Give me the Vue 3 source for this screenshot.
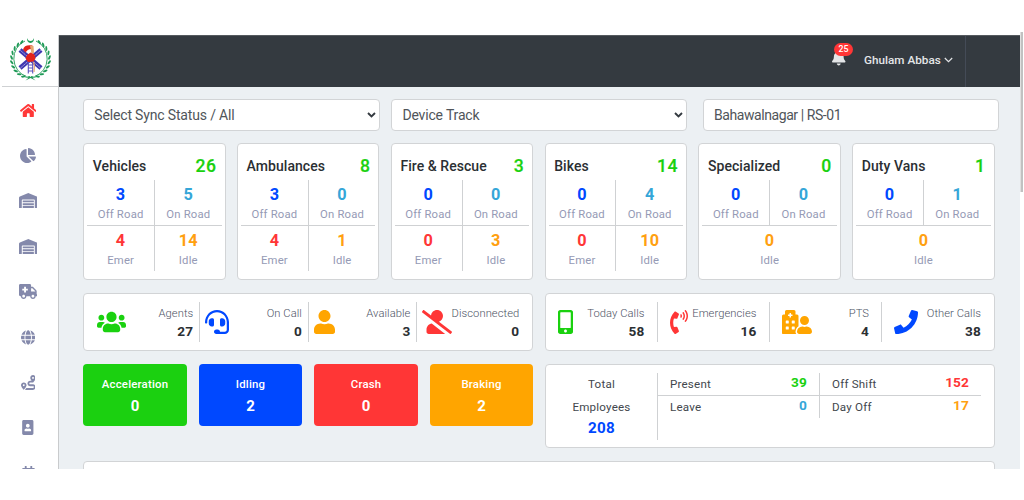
<script setup>
const nav = [
  { name: 'home', box: '0 0 576 512', w: 16.6, active: true, d: 'M280.37 148.26L96 300.11V464a16 16 0 0 0 16 16l112.06-.29a16 16 0 0 0 15.92-16V368a16 16 0 0 1 16-16h64a16 16 0 0 1 16 16v95.64a16 16 0 0 0 16 16.05L464 480a16 16 0 0 0 16-16V300L295.67 148.26a12.19 12.19 0 0 0-15.3 0zM571.6 251.47L488 182.56V44.05a12 12 0 0 0-12-12h-56a12 12 0 0 0-12 12v72.61L318.47 43a48 48 0 0 0-61 0L4.34 251.47a12 12 0 0 0-1.6 16.9l25.5 31A12 12 0 0 0 45.15 301l235.22-193.74a12.19 12.19 0 0 1 15.3 0L530.9 301a12 12 0 0 0 16.9-1.6l25.5-31a12 12 0 0 0-1.7-16.93z' },
  { name: 'reports', box: '0 0 544 512', w: 16, d: 'M527.79 288H290.5l158.03 158.03c6.04 6.04 15.98 6.53 22.19.68 38.7-36.46 65.32-85.61 73.13-140.86 1.34-9.46-6.51-17.85-16.06-17.85zm-15.83-64.8C503.72 103.74 408.26 8.28 288.8.04 279.68-.59 272 7.1 272 16.24V240h223.77c9.14 0 16.82-7.68 16.19-16.8zM224 288V50.71c0-9.55-8.39-17.4-17.84-16.06C86.99 51.49-4.1 155.6.14 280.37 4.5 408.51 114.83 513.59 243.03 511.98c50.4-.63 96.97-16.87 135.26-44.03 7.9-5.6 8.42-17.23 1.57-24.08L224 288z' },
  { name: 'warehouse', box: '0 0 640 512', w: 18.6, d: 'M504 352H136.4c-4.4 0-8 3.6-8 8l-.1 48c0 4.4 3.6 8 8 8H504c4.4 0 8-3.6 8-8v-48c0-4.4-3.6-8-8-8zm0 96H136.1c-4.4 0-8 3.6-8 8l-.1 48c0 4.4 3.6 8 8 8h368c4.4 0 8-3.6 8-8v-48c0-4.4-3.6-8-8-8zm0-192H136.6c-4.4 0-8 3.6-8 8l-.1 48c0 4.4 3.6 8 8 8H504c4.4 0 8-3.6 8-8v-48c0-4.4-3.6-8-8-8zm106.5-139L338.4 3.7a48.15 48.15 0 0 0-36.9 0L29.5 117C11.7 124.5 0 141.9 0 161.3V504c0 4.4 3.6 8 8 8h80c4.4 0 8-3.6 8-8V256c0-17.6 14.6-32 32.6-32h382.8c18 0 32.6 14.4 32.6 32v248c0 4.4 3.6 8 8 8h80c4.4 0 8-3.6 8-8V161.3c0-19.4-11.7-36.8-29.5-44.3z' },
  { name: 'ambulance', box: '0 0 640 512', w: 18.6, d: 'M624 352h-16V243.9c0-12.7-5.1-24.9-14.1-33.9L494 110.1c-9-9-21.2-14.1-33.9-14.1H416V48c0-26.5-21.5-48-48-48H48C21.5 0 0 21.5 0 48v320c0 26.5 21.5 48 48 48h16c0 53 43 96 96 96s96-43 96-96h128c0 53 43 96 96 96s96-43 96-96h48c8.8 0 16-7.2 16-16v-32c0-8.8-7.2-16-16-16zM160 464c-26.5 0-48-21.5-48-48s21.5-48 48-48 48 21.5 48 48-21.5 48-48 48zm144-248c0 4.4-3.6 8-8 8h-56v56c0 4.4-3.6 8-8 8h-48c-4.4 0-8-3.6-8-8v-56h-56c-4.4 0-8-3.6-8-8v-48c0-4.4 3.6-8 8-8h56v-56c0-4.4 3.6-8 8-8h48c4.4 0 8 3.6 8 8v56h56c4.4 0 8 3.6 8 8v48zm176 248c-26.5 0-48-21.5-48-48s21.5-48 48-48 48 21.5 48 48-21.5 48-48 48zm80-208H416V144h44.1l99.9 99.9V256z' },
  { name: 'globe', box: '0 0 496 512', w: 14.4, d: 'M336.5 160C322 70.7 287.8 8 248 8s-74 62.7-88.5 152h177zM152 256c0 22.2 1.2 43.5 3.3 64h185.3c2.1-20.5 3.3-41.8 3.3-64s-1.2-43.5-3.3-64H155.3c-2.1 20.5-3.3 41.8-3.3 64zm324.7-96c-28.6-67.9-86.5-120.4-158-141.6 24.4 33.8 41.2 84.7 50 141.6h108zM177.2 18.4C105.8 39.6 47.8 92.1 19.3 160h108c8.7-56.9 25.5-107.8 49.9-141.6zM487.4 192H372.7c2.1 21 3.3 42.5 3.3 64s-1.2 43-3.3 64h114.6c5.5-20.5 8.6-41.8 8.6-64s-3.1-43.5-8.5-64zM120 256c0-21.5 1.2-43 3.3-64H8.6C3.2 212.5 0 233.8 0 256s3.2 43.5 8.6 64h114.6c-2-21-3.2-42.5-3.2-64zm39.5 96c14.5 89.3 48.7 152 88.5 152s74-62.7 88.5-152h-177zm159.3 141.6c71.4-21.2 129.4-73.7 158-141.6h-108c-8.8 56.9-25.6 107.8-50 141.6zM19.3 352c28.6 67.9 86.5 120.4 158 141.6-24.4-33.8-41.2-84.7-50-141.6h-108z' },
  { name: 'route', box: '0 0 512 512', w: 14.8, d: 'M416 320h-96c-17.6 0-32-14.4-32-32s14.4-32 32-32h96s96-107 96-160-43-96-96-96-96 43-96 96c0 25.5 22.2 63.4 45.3 96H320c-52.9 0-96 43.1-96 96s43.1 96 96 96h96c17.6 0 32 14.4 32 32s-14.4 32-32 32H185.5c-16 24.8-33.8 47.7-47.3 64H416c52.9 0 96-43.1 96-96s-43.1-96-96-96zm0-256c17.7 0 32 14.3 32 32s-14.3 32-32 32-32-14.3-32-32 14.3-32 32-32zM96 256c-53 0-96 43-96 96s96 160 96 160 96-107 96-160-43-96-96-96zm0 128c-17.7 0-32-14.3-32-32s14.3-32 32-32 32 14.3 32 32-14.3 32-32 32z' },
  { name: 'portrait', box: '0 0 384 512', w: 11.6, d: 'M336 0H48C21.5 0 0 21.5 0 48v416c0 26.5 21.5 48 48 48h288c26.5 0 48-21.5 48-48V48c0-26.5-21.5-48-48-48zM192 128c35.3 0 64 28.7 64 64s-28.7 64-64 64-64-28.7-64-64 28.7-64 64-64zm112 236.8c0 10.6-10 19.2-22.4 19.2H102.4C90 384 80 375.4 80 364.8v-19.2c0-31.8 30.1-57.6 67.2-57.6h5c12.3 5.1 25.7 8 39.8 8s27.6-2.9 39.8-8h5c37.1 0 67.2 25.8 67.2 57.6v19.2z' },
  { name: 'calendar', box: '0 0 448 512', w: 13, d: 'M0 464c0 26.5 21.5 48 48 48h352c26.5 0 48-21.5 48-48V192H0v272zM400 64h-48V12c0-6.6-5.4-12-12-12h-40c-6.6 0-12 5.4-12 12v52H160V12c0-6.6-5.4-12-12-12h-40c-6.6 0-12 5.4-12 12v52H48C21.5 64 0 85.5 0 112v48h448v-48c0-26.5-21.5-48-48-48z' },
]
nav.splice(3, 0, { ...nav[2], name: 'station' })

const vehicles = [
  { title: 'Vehicles', total: 26, off: 3, on: 5, emer: 4, idle: 14 },
  { title: 'Ambulances', total: 8, off: 3, on: 0, emer: 4, idle: 1 },
  { title: 'Fire & Rescue', total: 3, off: 0, on: 0, emer: 0, idle: 3 },
  { title: 'Bikes', total: 14, off: 0, on: 4, emer: 0, idle: 10 },
  { title: 'Specialized', total: 0, off: 0, on: 0, idle: 0 },
  { title: 'Duty Vans', total: 1, off: 0, on: 1, idle: 0 },
]

const agents = [
  { label: 'Agents', value: 27, color: 'green', box: '0 0 640 512', w: 29, d: 'M96 224c35.3 0 64-28.7 64-64s-28.7-64-64-64-64 28.7-64 64 28.7 64 64 64zm448 0c35.3 0 64-28.7 64-64s-28.7-64-64-64-64 28.7-64 64 28.7 64 64 64zm32 32h-64c-17.6 0-33.5 7.1-45.1 18.6 40.3 22.1 68.9 62 75.1 109.4h66c17.7 0 32-14.3 32-32v-32c0-35.3-28.7-64-64-64zm-256 0c61.9 0 112-50.1 112-112S381.9 32 320 32 208 82.1 208 144s50.1 112 112 112zm76.8 32h-8.3c-20.8 10-43.9 16-68.5 16s-47.6-6-68.5-16h-8.3C179.6 288 128 339.6 128 403.2V432c0 26.5 21.5 48 48 48h288c26.5 0 48-21.5 48-48v-28.8c0-63.6-51.6-115.2-115.2-115.2zm-223.7-13.4C161.5 263.1 145.6 256 128 256H64c-35.3 0-64 28.7-64 64v32c0 17.7 14.3 32 32 32h65.9c6.3-47.4 34.9-87.3 75.2-109.4z' },
  { label: 'On Call', value: 0, color: 'blue', box: '0 0 512 512', w: 24, d: 'M192 208c0-17.67-14.33-32-32-32h-16c-35.35 0-64 28.65-64 64v48c0 35.35 28.65 64 64 64h16c17.67 0 32-14.33 32-32V208zm176 144c35.35 0 64-28.65 64-64v-48c0-35.35-28.65-64-64-64h-16c-17.67 0-32 14.33-32 32v112c0 17.67 14.33 32 32 32h16zM256 0C113.18 0 4.58 118.83 0 256v16c0 8.84 7.16 16 16 16h16c8.84 0 16-7.16 16-16v-16c0-114.69 93.31-208 208-208s208 93.31 208 208h-.12c.08 2.43.12 165.72.12 165.72 0 23.35-18.93 42.28-42.28 42.28H320c0-26.51-21.49-48-48-48h-32c-26.51 0-48 21.49-48 48s21.49 48 48 48h181.72c49.86 0 90.28-40.42 90.28-90.28V256C507.42 118.83 398.82 0 256 0z' },
  { label: 'Available', value: 3, color: 'orange', box: '0 0 448 512', w: 21, d: 'M224 256c70.7 0 128-57.3 128-128S294.7 0 224 0 96 57.3 96 128s57.3 128 128 128zm89.6 32h-16.7c-22.2 10.2-46.9 16-72.9 16s-50.6-5.8-72.9-16h-16.7C60.2 288 0 348.2 0 422.4V464c0 26.5 21.5 48 48 48h352c26.5 0 48-21.5 48-48v-41.6c0-74.2-60.2-134.4-134.4-134.4z' },
  { label: 'Disconnected', value: 0, color: 'red', box: '0 0 640 512', w: 30, d: 'M633.8 458.1L362.3 248.3C412.1 230.7 448 183.8 448 128 448 57.3 390.7 0 320 0c-67.1 0-121.5 51.8-126.9 117.4L45.5 3.4C38.5-2 28.5-.8 23 6.2L3.4 31.4c-5.4 7-4.2 17 2.8 22.4l588.4 454.7c7 5.4 17 4.2 22.5-2.8l19.6-25.3c5.4-6.8 4.1-16.9-2.9-22.3zM96 422.4V464c0 26.5 21.5 48 48 48h350.2L207.4 290.3C144.2 301.3 96 356 96 422.4z' },
]

const calls = [
  { label: 'Today Calls', value: 58, color: 'green', box: '0 0 320 512', w: 15, d: 'M272 0H48C21.5 0 0 21.5 0 48v416c0 26.5 21.5 48 48 48h224c26.5 0 48-21.5 48-48V48c0-26.5-21.5-48-48-48zM160 480c-17.7 0-32-14.3-32-32s14.3-32 32-32 32 14.3 32 32-14.3 32-32 32zm112-108c0 6.6-5.4 12-12 12H60c-6.6 0-12-5.4-12-12V60c0-6.6 5.4-12 12-12h200c6.6 0 12 5.4 12 12v312z' },
  { label: 'Emergencies', value: 16, color: 'red', box: '0 0 384 512', w: 18, d: 'M97.333 506.966c-129.874-129.874-129.681-340.252 0-469.933 5.698-5.698 14.527-6.632 21.263-2.422l64.817 40.513a17.187 17.187 0 0 1 6.849 20.958l-32.408 81.021a17.188 17.188 0 0 1-17.669 10.719l-55.81-5.58c-21.051 58.261-20.612 122.471 0 179.515l55.811-5.581a17.188 17.188 0 0 1 17.669 10.719l32.408 81.022a17.188 17.188 0 0 1-6.849 20.958l-64.817 40.513a17.19 17.19 0 0 1-21.264-2.422zM247.126 95.473c11.832 20.047 11.832 45.008 0 65.055-3.95 6.693-13.108 7.959-18.718 2.581l-5.975-5.726c-3.911-3.748-4.793-9.622-2.261-14.41a32.063 32.063 0 0 0 0-29.945c-2.533-4.788-1.65-10.662 2.261-14.41l5.975-5.726c5.61-5.378 14.768-4.112 18.718 2.581zm91.787-91.187c60.14 71.604 60.092 175.882 0 247.428-4.474 5.327-12.53 5.746-17.552.933l-5.798-5.557c-4.56-4.371-4.977-11.529-.93-16.379 49.687-59.538 49.646-145.933 0-205.422-4.047-4.85-3.631-12.008.93-16.379l5.798-5.557c5.022-4.813 13.078-4.394 17.552.933zm-45.972 44.941c36.05 46.322 36.108 111.149 0 157.546-4.39 5.641-12.697 6.251-17.856 1.304l-5.818-5.579c-4.4-4.219-4.998-11.095-1.285-15.931 26.536-34.564 26.534-82.572 0-117.134-3.713-4.836-3.115-11.711 1.285-15.931l5.818-5.579c5.159-4.947 13.466-4.337 17.856 1.304z' },
  { label: 'PTS', value: 4, color: 'orange', box: '0 0 640 512', w: 30, d: 'M480 320a96 96 0 1 0-96-96 96 96 0 0 0 96 96zm48 32a22.88 22.88 0 0 0-7.06 1.09 124.76 124.76 0 0 1-81.89 0A22.82 22.82 0 0 0 432 352a112 112 0 0 0-112 112.62c.14 26.26 21.73 47.38 48 47.38h224c26.27 0 47.86-21.12 48-47.38A112 112 0 0 0 528 352zm-198.09 10.45A145.19 145.19 0 0 1 352 344.62V128a32 32 0 0 0-32-32h-32V32a32 32 0 0 0-32-32H96a32 32 0 0 0-32 32v64H32a32 32 0 0 0-32 32v368a16 16 0 0 0 16 16h288.31A78.62 78.62 0 0 1 288 464.79a143.06 143.06 0 0 1 41.91-102.34zM144 404a12 12 0 0 1-12 12H92a12 12 0 0 1-12-12v-40a12 12 0 0 1 12-12h40a12 12 0 0 1 12 12zm0-128a12 12 0 0 1-12 12H92a12 12 0 0 1-12-12v-40a12 12 0 0 1 12-12h40a12 12 0 0 1 12 12zm48-122a6 6 0 0 1-6 6h-20a6 6 0 0 1-6-6v-26h-26a6 6 0 0 1-6-6v-20a6 6 0 0 1 6-6h26V70a6 6 0 0 1 6-6h20a6 6 0 0 1 6 6v26h26a6 6 0 0 1 6 6v20a6 6 0 0 1-6 6h-26zm80 250a12 12 0 0 1-12 12h-40a12 12 0 0 1-12-12v-40a12 12 0 0 1 12-12h40a12 12 0 0 1 12 12zm0-128a12 12 0 0 1-12 12h-40a12 12 0 0 1-12-12v-40a12 12 0 0 1 12-12h40a12 12 0 0 1 12 12z' },
  { label: 'Other Calls', value: 38, color: 'blue', box: '0 0 512 512', w: 24, d: 'M493.4 24.6l-104-24c-11.3-2.6-22.9 3.3-27.5 13.9l-48 112c-4.2 9.8-1.4 21.3 6.9 28l60.6 49.6c-36 76.7-98.9 140.5-177.2 177.2l-49.6-60.6c-6.8-8.3-18.2-11.1-28-6.9l-112 48C3.9 366.5-2 378.1.6 389.4l24 104C27.1 504.2 36.7 512 48 512c256.1 0 464-207.5 464-464 0-11.2-7.7-20.9-18.6-23.4z' },
]

const events = [
  { label: 'Acceleration', value: 0, color: 'green' },
  { label: 'Idling', value: 2, color: 'blue' },
  { label: 'Crash', value: 0, color: 'red' },
  { label: 'Braking', value: 2, color: 'orange' },
]

const bell = 'M224 512c35.32 0 63.97-28.65 63.97-64H160.03c0 35.35 28.65 64 63.97 64zm215.39-149.71c-19.32-20.76-55.47-51.99-55.47-154.29 0-77.7-54.48-139.9-127.94-155.16V32c0-17.67-14.32-32-31.98-32s-31.98 14.33-31.98 32v20.84C118.56 68.1 64.08 130.3 64.08 208c0 102.3-36.15 133.53-55.47 154.29-6 6.45-8.66 14.16-8.61 21.71.11 16.4 12.98 32 32.1 32h383.8c19.12 0 32-15.6 32.1-32 .05-7.55-2.61-15.27-8.61-21.71z'
const leaves = Array.from({ length: 10 }, (_, i) => 22 + i * 14.5)
</script>

<template>
  <div class="page">
    <aside class="sidebar">
      <div class="brand">
        <svg class="emblem" viewBox="0 0 42 46">
          <path d="M15.5 5A18.5 19 0 0 0 17 40.5M26.5 5A18.5 19 0 0 1 25 40.5" fill="none" stroke="#1f9a57" stroke-width=".9" />
          <g fill="#1f9a57">
            <template v-for="a in leaves" :key="a">
              <ellipse cx="21" cy="42" rx="1" ry="2.4" :transform="`rotate(${a} 21 23) rotate(62 21 42)`" />
              <ellipse cx="21" cy="42" rx="1" ry="2.4" :transform="`rotate(${-a} 21 23) rotate(-62 21 42)`" />
            </template>
          </g>
          <path d="M18 2a3.4 3.4 0 1 0 6 0a2.7 2.7 0 1 1-6 0z" fill="#1f9a57" />
          <path d="M15 41.5l5-1.5 1 1 1-1 5 1.5-4 .2 3 2.8-5-2.5-5 2.5 3-2.8z" fill="#1f9a57" />
          <g stroke="#4038b0" stroke-width="4.6">
            <path d="M10.5 14L31.5 32M31.5 14L10.5 32" />
          </g>
          <g stroke="#e4e2f8" stroke-width=".8" fill="none">
            <path d="M11 14.5L31 32M31 14.5L11 32" stroke-dasharray="1.5 1" />
          </g>
          <path d="M18.8 26v11.500M23.200 26v11.500M18.500 29h5M18.500 32h5M18.500 35h5" stroke="#5a52c0" stroke-width="1.100" fill="none" />
          <path d="M13.5 13.500c1-3.500 4-5 9.500-4l-.5 3.500c-3-.5-5 1.500-6.500 3.500z" fill="#e3231b" />
          <path d="M20.500 9.500l3.500.5.5 7-2.500 1z" fill="#e8a873" />
          <path d="M17.500 19l3.500-2.500 4 2 1 4-2 3-5.500.5-2.500-3.500z" fill="#e3231b" />
          <path d="M24 26l1 4-.5 6" stroke="#e8a873" stroke-width="1.200" fill="none" />
        </svg>
      </div>
      <nav>
        <a v-for="n in nav" :key="n.name" :class="{ active: n.active }">
          <svg :viewBox="n.box" :width="n.w" height="15"><path :d="n.d" /></svg>
        </a>
      </nav>
    </aside>

    <div class="main">
      <header>
        <div class="alerts">
          <svg viewBox="0 0 448 512" width="13.5" height="15.5"><path :d="bell" /></svg>
          <span class="badge">25</span>
        </div>
        <div class="user">
          <span>Ghulam Abbas</span>
          <svg width="9" height="6" viewBox="0 0 9 6"><path d="M.8 1L4.5 4.6 8.2 1" /></svg>
        </div>
      </header>

      <div class="content">
        <div class="filters">
          <div class="field select">Select Sync Status / All
            <svg width="9" height="6" viewBox="0 0 9 6"><path d="M1 1l3.5 3.4L8 1" /></svg>
          </div>
          <div class="field select">Device Track
            <svg width="9" height="6" viewBox="0 0 9 6"><path d="M1 1l3.5 3.4L8 1" /></svg>
          </div>
          <div class="field input">Bahawalnagar | RS-01</div>
        </div>

        <div class="vehicles">
          <section v-for="v in vehicles" :key="v.title" class="card vehicle">
            <div class="title"><span>{{ v.title }}</span><b class="t-green">{{ v.total }}</b></div>
            <div class="quad">
              <div class="cell side"><b class="t-blue">{{ v.off }}</b><span>Off Road</span></div>
              <div class="cell"><b class="t-sky">{{ v.on }}</b><span>On Road</span></div>
            </div>
            <div class="quad lower">
              <div v-if="v.emer !== undefined" class="cell side"><b class="t-red">{{ v.emer }}</b><span>Emer</span></div>
              <div class="cell"><b class="t-orange">{{ v.idle }}</b><span>Idle</span></div>
            </div>
          </section>
        </div>

        <div class="halves">
          <section v-for="(group, g) in [agents, calls]" :key="g" class="card stats" :class="g ? 'calls' : 'agents'">
            <div v-for="s in group" :key="s.label" class="stat">
              <svg :class="'t-' + s.color" :viewBox="s.box" :width="s.w" height="24"><path :d="s.d" /></svg>
              <div class="figures"><span>{{ s.label }}</span><b>{{ s.value }}</b></div>
            </div>
          </section>
        </div>

        <div class="halves bottom">
          <div class="tiles">
            <div v-for="e in events" :key="e.label" class="tile" :class="'b-' + e.color">
              <span>{{ e.label }}</span><b>{{ e.value }}</b>
            </div>
          </div>
          <section class="card staff">
            <div class="total"><span>Total<br>Employees</span><b class="t-blue">208</b></div>
            <div class="attendance">
              <div class="row top">
                <div class="entry left"><span>Present</span><b class="t-green">39</b></div>
                <div class="entry"><span>Off Shift</span><b class="t-red">152</b></div>
              </div>
              <div class="row">
                <div class="entry left"><span>Leave</span><b class="t-sky">0</b></div>
                <div class="entry"><span>Day Off</span><b class="t-orange">17</b></div>
              </div>
            </div>
          </section>
        </div>

        <section class="card next"></section>
      </div>
    </div>
    <div class="scrollbar"></div>
  </div>
</template>

<style>
body { background: #fff; }
</style>

<style scoped>
* { box-sizing: border-box; }
.page {
  display: flex;
  width: 1024px;
  height: 469px;
  padding-top: 35px;
  overflow: hidden;
  font-family: Roboto, "Liberation Sans", sans-serif;
  letter-spacing: .4px;
  color: #2b2f33;
}
b { font-weight: 700; }
svg { display: block; fill: currentColor; flex: none; }

.sidebar { width: 59px; flex: none; border-right: 1px solid #c9cbcd; background: #fff; }
.brand { height: 52px; margin-left: 2px; border-bottom: 1px solid #cfd1d3; padding: 1px 0 0 7px; }
.emblem { width: 43px; height: 46px; }
nav { display: flex; flex-direction: column; }
nav a { height: 45.4px; flex: none; display: flex; align-items: center; justify-content: center; padding: 1px 2px 0 0; color: #8489ab; }
nav a.active { color: #ff3838; }

.main { width: 961px; flex: none; display: flex; flex-direction: column; }
header { height: 52px; flex: none; background: #343a40; border-top: 1px solid #555a5f; display: flex; justify-content: flex-end; color: #e4e6e8; }
.alerts { position: relative; width: 32px; padding-top: 14px; }
.badge { position: absolute; left: 2px; top: 7px; width: 19px; height: 13px; border-radius: 7px; background: #ff3636; color: #fff; font-size: 8.8px; font-weight: 500; line-height: 13px; text-align: center; letter-spacing: .1px; }
.user { width: 102px; margin-right: 54px; border-right: 1px solid #444b57; display: flex; align-items: center; gap: 3px; height: 51px; padding-bottom: 3px; font-size: 11.7px; font-weight: 500; letter-spacing: .02px; white-space: nowrap; }
.user svg path { fill: none; stroke: currentColor; stroke-width: 1.2; }

.content { flex: 1; background: #ecf0f3; padding: 12px 0 0 24.3px; overflow: hidden; }
.card { background: #fff; border: 1px solid #d2d4d6; border-radius: 4px; }
.filters { display: grid; grid-template-columns: 296.4px 296px 300px; column-gap: 11.7px; }
.filters .input { margin-left: 4px; }
.field { height: 32px; display: flex; align-items: center; justify-content: space-between; padding: 0 3px 1px 10px; background: #fff; border: 1px solid #d2d4d6; border-radius: 4px; font-size: 14px; letter-spacing: -.16px; color: #50555a; white-space: nowrap; }
.field.input { letter-spacing: -.43px; }
.field svg path { fill: none; stroke: #343a40; stroke-width: 1.9; }

.vehicles { display: grid; grid-template-columns: repeat(6, 142.3px); column-gap: 11.5px; margin-top: 12px; }
.vehicle { height: 137px; padding: 10px 3px 0 3px; }
.title { display: flex; justify-content: space-between; align-items: center; height: 26px; padding: 0 5px 3px 5.5px; font-size: 14px; font-weight: 500; letter-spacing: .05px; white-space: nowrap; }
.title b { font-size: 17.6px; font-weight: 500; letter-spacing: .5px; -webkit-text-stroke: .2px; }
.quad { display: flex; height: 45px; }
.lower { height: 46px; border-top: 1px solid #cfd1d3; }
.cell { flex: 1; display: flex; flex-direction: column; align-items: center; padding-top: 5px; }
.side { border-right: 1px solid #cfd1d3; }
.cell b { font-size: 16.3px; line-height: 19px; letter-spacing: .2px; }
.cell span { font-size: 11.3px; line-height: 21px; letter-spacing: .18px; color: #959ab5; }

.halves { display: grid; grid-template-columns: 450px 450px; column-gap: 11.7px; margin-top: 13px; }
.stats { height: 58px; display: grid; padding: 8px 0 0 4px; }
.agents { grid-template-columns: 112px 108.6px 108.5px 1fr; }
.calls { grid-template-columns: 108px 112px 112.5px 1fr; }
.stat { height: 40px; display: flex; justify-content: space-between; border-right: 1px solid #cfd1d3; padding: 7.5px 6px 0 5px; }
.stat:first-child { padding-left: 8.5px; }
.calls .stat { padding-left: 12px; padding-right: 12.5px; }
.calls .stat:first-child { padding-left: 8px; }
.stat:last-child { border-right: 0; padding-right: 13px; }
.calls .stat:last-child { padding-right: 13px; }
.figures { width: 0; display: flex; flex-direction: column; align-items: flex-end; margin-top: -7px; white-space: nowrap; }
.figures span { font-size: 11.2px; line-height: 21px; font-weight: 300; letter-spacing: .06px; color: #4c5264; }
.figures b { font-size: 13.6px; line-height: 14px; letter-spacing: .2px; }

.bottom { margin-top: 13px; }
.tiles { display: grid; grid-template-columns: repeat(4, 103.5px); justify-content: space-between; }
.tile { height: 62px; border-radius: 4px; display: flex; flex-direction: column; align-items: center; padding-top: 10px; color: #fff; font-size: 11.4px; font-weight: 500; letter-spacing: .2px; }
.tile span { line-height: 21px; }
.tile b { font-size: 15px; line-height: 23px; }
.staff { height: 84px; display: flex; padding: 8px 13px 0 0; font-size: 11.6px; letter-spacing: .2px; }
.total { width: 112px; height: 67px; border-right: 1px solid #cfd1d3; display: flex; flex-direction: column; align-items: center; text-align: center; line-height: 23px; color: #42474d; }
.total b { font-size: 15.2px; line-height: 19px; letter-spacing: .2px; }
.attendance { flex: 1; }
.row { display: flex; height: 22px; }
.top { height: 23px; border-bottom: 1px solid #cfd1d3; }
.entry { flex: 1; display: flex; justify-content: space-between; padding: 0 12px; line-height: 21px; color: #42474d; }
.entry span { padding-top: 1px; }
.left { border-right: 1px solid #cfd1d3; }
.entry b { font-size: 13.7px; line-height: 18px; letter-spacing: .1px; }
.row:not(.top) .entry b { line-height: 19px; }
.next { width: 911.7px; height: 40px; margin-top: 13px; }

.scrollbar { width: 3px; height: 160px; margin-top: -3px; background: #c1c1c1; border-left: 1px solid #e0e0e0; }

.t-green { color: #1ad10f; }
.t-blue { color: #0048ff; }
.t-sky { color: #35a6d8; }
.t-red { color: #ff3636; }
.t-orange { color: #ffa010; }
svg.t-orange { color: #ffa500; }
.b-green { background: #1bd010; }
.b-blue { background: #0048ff; }
.b-red { background: #ff3636; }
.b-orange { background: #ffa500; }
</style>
